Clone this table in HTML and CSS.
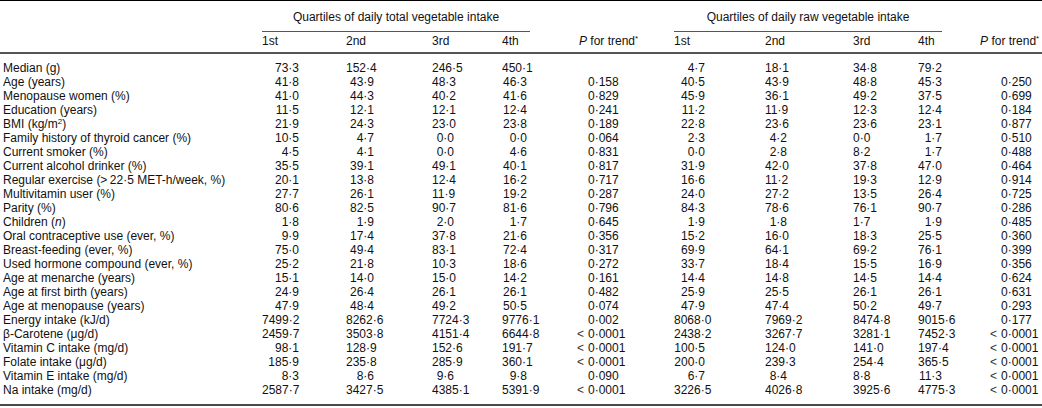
FILE: index.html
```html
<!DOCTYPE html>
<html>
<head>
<meta charset="utf-8">
<link rel="stylesheet" href="styles.css">
</head>
<body>
<table class="tbl">
<colgroup>
<col class="w-label"><col class="w-t1"><col class="w-t2"><col class="w-t3"><col class="w-t4"><col class="w-p1">
<col class="w-r1"><col class="w-r2"><col class="w-r3"><col class="w-r4"><col class="w-p2">
</colgroup>
<thead>
<tr class="span-row">
<th></th>
<th colspan="4" class="spanner"><div class="spanner-text sp-total">Quartiles of daily total vegetable intake</div></th>
<th></th>
<th colspan="4" class="spanner"><div class="spanner-text sp-raw">Quartiles of daily raw vegetable intake</div></th>
<th></th>
</tr>
<tr class="col-row">
<th></th>
<th>1st</th><th>2nd</th><th>3rd</th><th>4th</th>
<th class="ph"><i>P</i> for trend<sup>*</sup></th>
<th>1st</th><th>2nd</th><th>3rd</th><th>4th</th>
<th class="ph"><i>P</i> for trend<sup>*</sup></th>
</tr>
</thead>
<tbody>
<tr><td>Median (g)</td><td>73·3</td><td>152·4</td><td>246·5</td><td>450·1</td><td></td><td>4·7</td><td>18·1</td><td>34·8</td><td>79·2</td><td></td></tr>
<tr><td>Age (years)</td><td>41·8</td><td>43·9</td><td>48·3</td><td>46·3</td><td>0·158</td><td>40·5</td><td>43·9</td><td>48·8</td><td>45·3</td><td>0·250</td></tr>
<tr><td>Menopause women (%)</td><td>41·0</td><td>44·3</td><td>40·2</td><td>41·6</td><td>0·829</td><td>45·9</td><td>36·1</td><td>49·2</td><td>37·5</td><td>0·699</td></tr>
<tr><td>Education (years)</td><td>11·5</td><td>12·1</td><td>12·1</td><td>12·4</td><td>0·241</td><td>11·2</td><td>11·9</td><td>12·3</td><td>12·4</td><td>0·184</td></tr>
<tr><td>BMI (kg/m<sup>2</sup>)</td><td>21·9</td><td>24·3</td><td>23·0</td><td>23·8</td><td>0·189</td><td>22·8</td><td>23·6</td><td>23·6</td><td>23·1</td><td>0·877</td></tr>
<tr><td>Family history of thyroid cancer (%)</td><td>10·5</td><td>4·7</td><td>0·0</td><td>0·0</td><td>0·064</td><td>2·3</td><td>4·2</td><td>0·0</td><td>1·7</td><td>0·510</td></tr>
<tr><td>Current smoker (%)</td><td>4·5</td><td>4·1</td><td>0·0</td><td>4·6</td><td>0·831</td><td>0·0</td><td>2·8</td><td>8·2</td><td>1·7</td><td>0·488</td></tr>
<tr><td>Current alcohol drinker (%)</td><td>35·5</td><td>39·1</td><td>49·1</td><td>40·1</td><td>0·817</td><td>31·9</td><td>42·0</td><td>37·8</td><td>47·0</td><td>0·464</td></tr>
<tr><td>Regular exercise (&gt;&#8201;22·5 MET-h/week, %)</td><td>20·1</td><td>13·8</td><td>12·4</td><td>16·2</td><td>0·717</td><td>16·6</td><td>11·2</td><td>19·3</td><td>12·9</td><td>0·914</td></tr>
<tr><td>Multivitamin user (%)</td><td>27·7</td><td>26·1</td><td>11·9</td><td>19·2</td><td>0·287</td><td>24·0</td><td>27·2</td><td>13·5</td><td>26·4</td><td>0·725</td></tr>
<tr><td>Parity (%)</td><td>80·6</td><td>82·5</td><td>90·7</td><td>81·6</td><td>0·796</td><td>84·3</td><td>78·6</td><td>76·1</td><td>90·7</td><td>0·286</td></tr>
<tr><td>Children (<i>n</i>)</td><td>1·8</td><td>1·9</td><td>2·0</td><td>1·7</td><td>0·645</td><td>1·9</td><td>1·8</td><td>1·7</td><td>1·9</td><td>0·485</td></tr>
<tr><td>Oral contraceptive use (ever, %)</td><td>9·9</td><td>17·4</td><td>37·8</td><td>21·6</td><td>0·356</td><td>15·2</td><td>16·0</td><td>18·3</td><td>25·5</td><td>0·360</td></tr>
<tr><td>Breast-feeding (ever, %)</td><td>75·0</td><td>49·4</td><td>83·1</td><td>72·4</td><td>0·317</td><td>69·9</td><td>64·1</td><td>69·2</td><td>76·1</td><td>0·399</td></tr>
<tr><td>Used hormone compound (ever, %)</td><td>25·2</td><td>21·8</td><td>10·3</td><td>18·6</td><td>0·272</td><td>33·7</td><td>18·4</td><td>15·5</td><td>16·9</td><td>0·356</td></tr>
<tr><td>Age at menarche (years)</td><td>15·1</td><td>14·0</td><td>15·0</td><td>14·2</td><td>0·161</td><td>14·4</td><td>14·8</td><td>14·5</td><td>14·4</td><td>0·624</td></tr>
<tr><td>Age at first birth (years)</td><td>24·9</td><td>26·4</td><td>26·1</td><td>26·1</td><td>0·482</td><td>25·9</td><td>25·5</td><td>26·1</td><td>26·1</td><td>0·631</td></tr>
<tr><td>Age at menopause (years)</td><td>47·9</td><td>48·4</td><td>49·2</td><td>50·5</td><td>0·074</td><td>47·9</td><td>47·4</td><td>50·2</td><td>49·7</td><td>0·293</td></tr>
<tr><td>Energy intake (kJ/d)</td><td>7499·2</td><td>8262·6</td><td>7724·3</td><td>9776·1</td><td>0·002</td><td>8068·0</td><td>7969·2</td><td>8474·8</td><td>9015·6</td><td>0·177</td></tr>
<tr><td>β-Carotene (μg/d)</td><td>2459·7</td><td>3503·8</td><td>4151·4</td><td>6644·8</td><td><span class="lt">&lt;</span>0·0001</td><td>2438·2</td><td>3267·7</td><td>3281·1</td><td>7452·3</td><td><span class="lt">&lt;</span>0·0001</td></tr>
<tr><td>Vitamin C intake (mg/d)</td><td>98·1</td><td>128·9</td><td>152·6</td><td>191·7</td><td><span class="lt">&lt;</span>0·0001</td><td>100·5</td><td>124·0</td><td>141·0</td><td>197·4</td><td><span class="lt">&lt;</span>0·0001</td></tr>
<tr><td>Folate intake (μg/d)</td><td>185·9</td><td>235·8</td><td>285·9</td><td>360·1</td><td><span class="lt">&lt;</span>0·0001</td><td>200·0</td><td>239·3</td><td>254·4</td><td>365·5</td><td><span class="lt">&lt;</span>0·0001</td></tr>
<tr><td>Vitamin E intake (mg/d)</td><td>8·3</td><td>8·6</td><td>9·6</td><td>9·8</td><td>0·090</td><td>6·7</td><td>8·4</td><td>8·8</td><td>11·3</td><td><span class="lt">&lt;</span>0·0001</td></tr>
<tr><td>Na intake (mg/d)</td><td>2587·7</td><td>3427·5</td><td>4385·1</td><td>5391·9</td><td><span class="lt">&lt;</span>0·0001</td><td>3226·5</td><td>4026·8</td><td>3925·6</td><td>4775·3</td><td><span class="lt">&lt;</span>0·0001</td></tr>
</tbody>
</table>
</body>
</html>
```
FILE: styles.css
```css
html, body {
  margin: 0;
  padding: 0;
  background: #fff;
}
body {
  font-family: "Liberation Sans", Arial, sans-serif;
  font-size: 12px;
  color: #111;
}
.tbl {
  width: 1042px;
  table-layout: fixed;
  border-collapse: collapse;
  border-top: 1px solid #000;
  border-bottom: 2px solid #4a4a4a;
}
.w-label { width: 262px; }
.w-t1 { width: 84px; }
.w-t2 { width: 86px; }
.w-t3 { width: 70px; }
.w-t4 { width: 77px; }
.w-p1 { width: 95px; }
.w-r1 { width: 91px; }
.w-r2 { width: 88px; }
.w-r3 { width: 65px; }
.w-r4 { width: 62px; }
.w-p2 { width: 62px; }

.tbl th {
  font-weight: normal;
  text-align: left;
  padding: 0;
  white-space: nowrap;
}
.span-row th {
  vertical-align: bottom;
}
.spanner-text {
  padding: 9px 0 7px;
  line-height: 14px;
  text-align: center;
  border-bottom: 1px solid #555;
}
.sp-total { margin-right: 49px; }
.sp-raw { margin-right: 38px; }

.col-row th {
  padding: 2px 0 4px;
  line-height: 14px;
  border-bottom: 2px solid #555;
}
.tbl sup {
  font-size: 8px;
  line-height: 0;
  vertical-align: 4px;
}

.tbl td {
  padding: 0;
  line-height: 14px;
  text-align: right;
  white-space: nowrap;
}
.tbl tbody tr:first-child td { padding-top: 7px; }
.tbl tbody tr:last-child td { padding-bottom: 7px; }

.tbl td:nth-child(1) { text-align: left; padding-left: 3px; }
.tbl td:nth-child(2) { padding-right: 47px; }
.tbl td:nth-child(3) { padding-right: 58px; }
.tbl td:nth-child(4) { padding-right: 48px; }
.tbl td:nth-child(5) { padding-right: 52px; }
.tbl td:nth-child(6) { text-align: left; padding-left: 9px; }
.tbl td:nth-child(7) { padding-right: 60px; }
.tbl td:nth-child(8) { padding-right: 66px; }
.tbl td:nth-child(9) { padding-right: 52px; }
.tbl td:nth-child(10) { padding-right: 38px; }
.tbl td:nth-child(11) { text-align: left; padding-left: 21px; }

.lt {
  display: inline-block;
  width: 11px;
  margin-left: -11px;
  text-align: left;
  color: #333;
}
```
